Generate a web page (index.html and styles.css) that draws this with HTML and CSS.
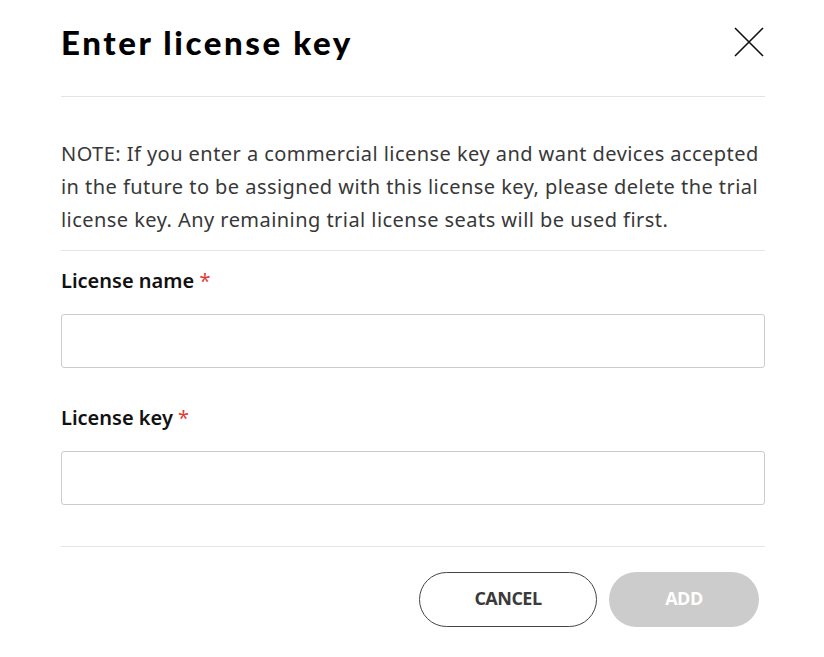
FILE: index.html
```html
<!DOCTYPE html>
<html lang="en">
<head>
<meta charset="utf-8">
<title>Enter license key</title>
<link rel="stylesheet" href="styles.css">
</head>
<body>
<div class="dialog">
  <header class="head">
    <h1 class="title">Enter license key</h1>
    <button class="close" aria-label="Close">
      <svg width="30" height="30" viewBox="0 0 30 30"><path d="M1 1L29 29M29 1L1 29" stroke="#111" stroke-width="1.6" fill="none"/></svg>
    </button>
  </header>
  <p class="note">NOTE: If you enter a commercial license key and want devices accepted in the future to be assigned with this license key, please delete the trial license key. Any remaining trial license seats will be used first.</p>
  <div class="form">
    <label class="label">License name <span class="req">*</span></label>
    <input class="field" type="text">
    <label class="label label2">License key <span class="req">*</span></label>
    <input class="field" type="text">
  </div>
  <footer class="foot">
    <button class="btn cancel">CANCEL</button>
    <button class="btn add">ADD</button>
  </footer>
</div>
</body>
</html>
```
FILE: styles.css
```css
* { box-sizing: border-box; }
html, body { margin: 0; background: #fff; }
body { font-family: "Noto Sans", sans-serif; }
.dialog { padding: 0 59px 0 61px; }
.head {
  display: flex; justify-content: space-between; align-items: center;
  height: 97px; border-bottom: 1px solid #e3e3ea;
  padding-bottom: 12px;
}
.title {
  margin: 0; font-family: Lato, sans-serif; font-weight: 900; font-size: 33px;
  color: #000; letter-spacing: 2.6px;
}
.close { background: none; border: 0; padding: 0; margin-right: 1px; width: 30px; height: 30px; cursor: pointer; }
.close svg { display: block; }
.note {
  margin: 0; padding: 40px 0 14px;
  font-size: 20px; line-height: 33px; color: #383838; letter-spacing: 0.45px;
  border-bottom: 1px solid #e3e3ea;
}
.form { display: flex; flex-direction: column; padding-top: 16px; border-bottom: 1px solid #e3e3ea; padding-bottom: 41px; }
.label { font-size: 20px; font-weight: 600; color: #111; line-height: 28px; margin-bottom: 19px; }
.label2 { margin-top: 36px; margin-bottom: 19px; }
.req { color: #e53935; font-weight: 400; }
.field { height: 54px; border: 1px solid #cccccc; border-radius: 3px; width: 100%; font-size: 18px; padding: 0 14px; }
.foot { display: flex; justify-content: flex-end; gap: 12px; padding: 25px 6px 0 0; }
.btn {
  height: 55px; border-radius: 28px; font-family: "Open Sans", sans-serif;
  font-weight: 700; font-size: 18px; letter-spacing: -0.5px; padding: 0 0 4px;
}
.cancel { width: 178px; background: #fff; border: 1px solid #444; color: #3a3a3a; }
.add { width: 150px; background: #cccccc; border: 0; color: #fff; }
```
